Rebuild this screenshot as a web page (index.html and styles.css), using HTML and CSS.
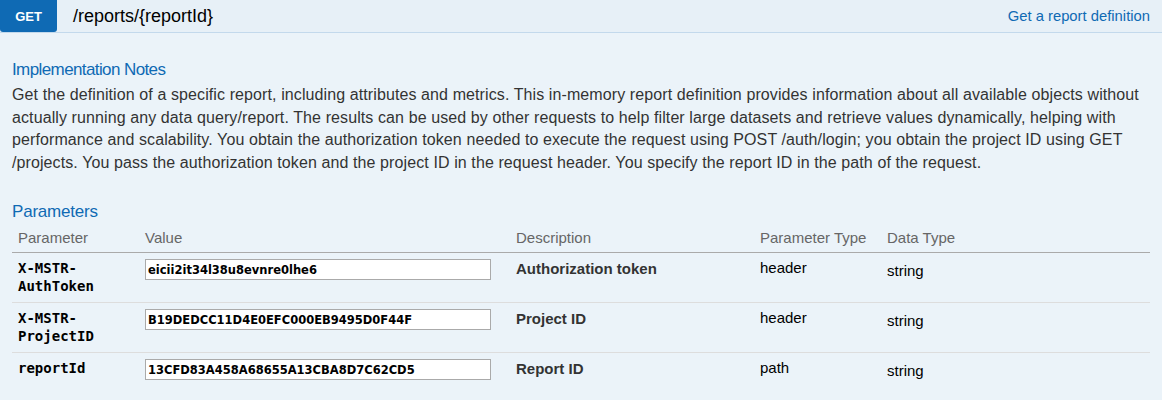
FILE: index.html
```html
<!DOCTYPE html>
<html>
<head>
<meta charset="utf-8">
<link rel="stylesheet" href="styles.css">
</head>
<body>
<div class="op">
  <div class="op-head">
    <span class="badge">GET</span>
    <span class="path">/reports/{reportId}</span>
    <span class="summary">Get a report definition</span>
  </div>
  <div class="op-body">
    <h4 class="sec-title">Implementation Notes</h4>
    <p class="notes">Get the definition of a specific report, including attributes and metrics. This in-memory report definition provides information about all available objects without actually running any data query/report. The results can be used by other requests to help filter large datasets and retrieve values dynamically, helping with performance and scalability. You obtain the authorization token needed to execute the request using POST /auth/login; you obtain the project ID using GET /projects. You pass the authorization token and the project ID in the request header. You specify the report ID in the path of the request.</p>
    <h4 class="sec-title params-title">Parameters</h4>
    <table class="params">
      <colgroup>
        <col class="c1"><col class="c2"><col class="c3"><col class="c4"><col class="c5">
      </colgroup>
      <thead>
        <tr><th>Parameter</th><th>Value</th><th>Description</th><th>Parameter Type</th><th>Data Type</th></tr>
      </thead>
      <tbody>
        <tr>
          <td class="pname">X-MSTR-<br>AuthToken</td>
          <td><input class="pinput" type="text" value="eicii2it34l38u8evnre0lhe6"></td>
          <td class="pdesc">Authorization token</td>
          <td class="ptype">header</td>
          <td class="dtype">string</td>
        </tr>
        <tr>
          <td class="pname">X-MSTR-<br>ProjectID</td>
          <td><input class="pinput" type="text" value="B19DEDCC11D4E0EFC000EB9495D0F44F"></td>
          <td class="pdesc">Project ID</td>
          <td class="ptype">header</td>
          <td class="dtype">string</td>
        </tr>
        <tr>
          <td class="pname">reportId</td>
          <td><input class="pinput" type="text" value="13CFD83A458A68655A13CBA8D7C62CD5"></td>
          <td class="pdesc">Report ID</td>
          <td class="ptype">path</td>
          <td class="dtype">string</td>
        </tr>
      </tbody>
    </table>
  </div>
</div>
</body>
</html>
```

FILE: styles.css
```css
html, body {
  margin: 0;
  padding: 0;
  background: #ebf3f9;
  font-family: "Liberation Sans", Arial, sans-serif;
  color: #333;
}
.op-head {
  display: flex;
  align-items: center;
  height: 32px;
  background: #e7f0f7;
  border-bottom: 1px solid #c3d9ec;
}
.badge {
  width: 57px;
  height: 32px;
  display: flex;
  align-items: center;
  justify-content: center;
  background: #0f6ab4;
  color: #fff;
  font-weight: bold;
  font-size: 13px;
  border-radius: 0 0 3px 3px;
}
.path {
  margin-left: 16px;
  font-size: 18px;
  color: #000;
  flex: 1;
}
.summary {
  font-size: 14.8px;
  color: #0f6ab4;
  margin-right: 12px;
}
.op-body {
  padding: 27px 12px 0 12px;
}
.sec-title {
  margin: 0;
  font-size: 17px;
  letter-spacing: -0.6px;
  font-weight: normal;
  color: #0f6ab4;
  line-height: 20px;
}
.notes {
  margin: 4px 0 0 0;
  font-size: 16px;
  letter-spacing: 0.1px;
  line-height: 22.5px;
  color: #333;
}
.params-title {
  margin-top: 28px;
  letter-spacing: -0.2px;
}
.params {
  width: 100%;
  border-collapse: collapse;
  margin-top: 4px;
  table-layout: fixed;
}
.c1 { width: 127px; }
.c2 { width: 371px; }
.c3 { width: 244px; }
.c4 { width: 127px; }
.params th {
  text-align: left;
  font-weight: normal;
  color: #666;
  font-size: 15px;
  padding: 3px 6px 5px 6px;
  border-bottom: 1px solid #aaa;
  line-height: 18px;
}
.params tbody tr {
  height: 50px;
}
.params td {
  vertical-align: top;
  padding: 6px 6px 0 6px;
  border-bottom: 1px solid #ddd;
  font-size: 15px;
}
.params tbody tr:last-child td {
  border-bottom: none;
}
.pname {
  font-family: "DejaVu Sans Mono", monospace;
  font-weight: bold;
  font-size: 14px !important;
  line-height: 17.5px;
  color: #000;
  padding-top: 7px !important;
}
.pinput {
  box-sizing: border-box;
  width: 346px;
  height: 21px;
  margin: 0;
  border: 1px solid #aaa;
  background: #fff;
  padding: 0 2px;
  font-family: "DejaVu Sans", sans-serif;
  font-weight: bold;
  font-size: 11.5px;
  color: #000;
}
.pdesc {
  font-weight: bold;
  color: #333;
  line-height: 18px;
  padding-top: 7px !important;
}
.ptype {
  color: #000;
  line-height: 18px;
  padding-top: 6px !important;
}
.dtype {
  color: #000;
  line-height: 18px;
  padding-top: 9px !important;
}
```
